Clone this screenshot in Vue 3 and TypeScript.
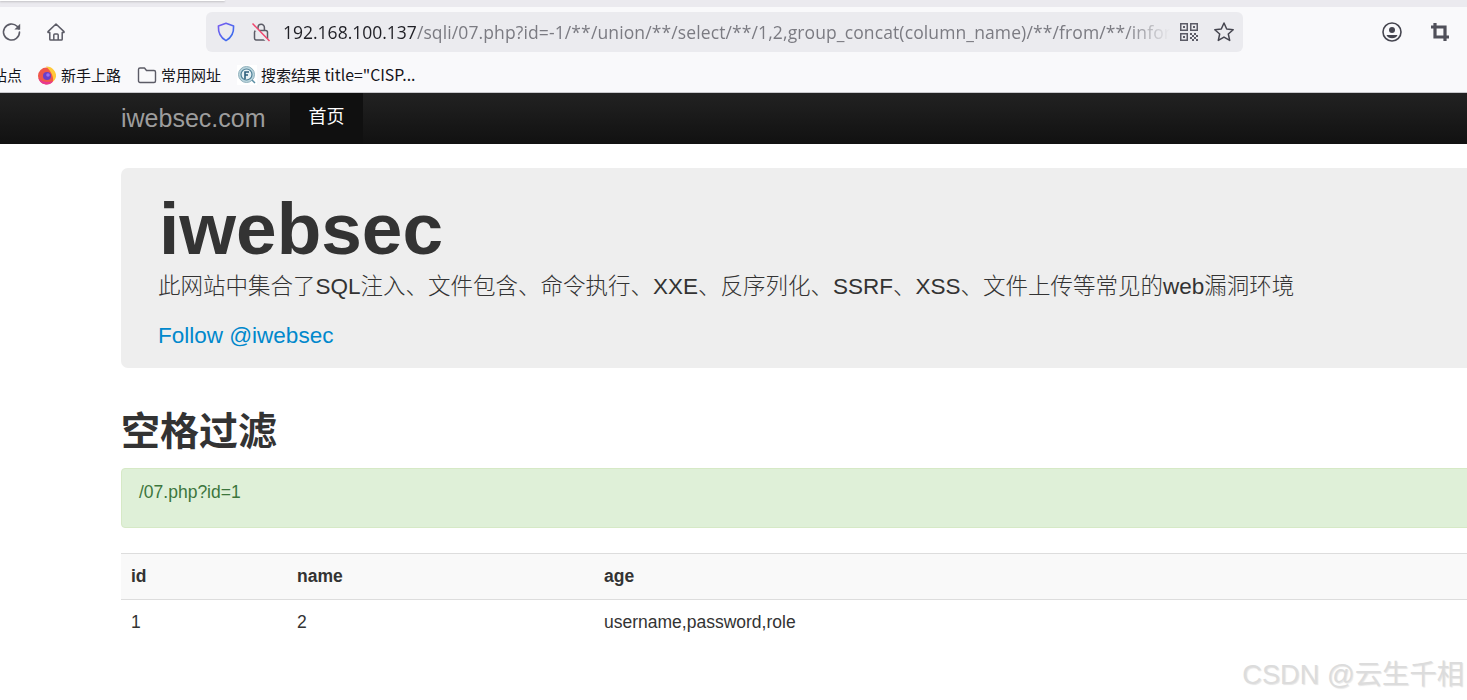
<script setup lang="ts">
const url = {
  host: '192.168.100.137',
  path: '/sqli/07.php?id=-1/**/union/**/select/**/1,2,group_concat(column_name)/**/from/**/information_schema.columns',
}
const columns = ['id', 'name', 'age']
const rows = [['1', '2', 'username,password,role']]
</script>

<template>
  <div class="page">
    <div class="tabstrip"><div class="tab"></div></div>
    <div class="toolbar">
      <div class="reload-cell">
        <svg width="22" height="22" viewBox="0 0 22 22" fill="none" stroke="#5b5b66" stroke-width="1.6">
          <path d="M18.500 11a8 8 0 1 1-2.400-5.700L18 8" stroke-linecap="round" />
          <path d="M19.200 2.800v5.800h-5.800z" fill="#5b5b66" stroke="none" />
        </svg>
      </div>
      <div class="home-cell">
        <svg width="20" height="20" viewBox="0 0 20 20" fill="none" stroke="#5b5b66" stroke-width="1.5" stroke-linejoin="round">
          <path d="M2 9.600 10 2l8 7.600v.8h-1.800v6.800a.8.8 0 0 1-.8.8H4.600a.8.8 0 0 1-.8-.8v-6.800H2z" />
          <path d="M7.800 18v-5a1 1 0 0 1 1-1h2.400a1 1 0 0 1 1 1v5" />
        </svg>
      </div>
      <div class="urlbar">
        <svg class="shield" width="20" height="22" viewBox="0 0 20 22" fill="none" stroke-width="1.6">
          <defs>
            <linearGradient id="shield-grad" x1="0" y1="0" x2="1" y2="1">
              <stop offset="0" stop-color="#7b5cf0" />
              <stop offset="1" stop-color="#2f6fed" />
            </linearGradient>
          </defs>
          <path d="M10 2.200 17.600 5c.3 6.600-1.900 11.600-7.600 14.600C4.300 16.600 2.100 11.600 2.400 5z" stroke="url(#shield-grad)" stroke-linejoin="round" />
        </svg>
        <svg class="lock" width="20" height="22" viewBox="0 0 20 22" fill="none">
          <path d="M7 9.500V6.500a3.200 3.200 0 0 1 6.400 0v3" stroke="#5b5b66" stroke-width="1.500" />
          <rect x="3.500" y="9.500" width="13" height="9.500" rx="1.800" stroke="#5b5b66" stroke-width="1.500" />
          <path d="M0.500 3.500 17 20.500" stroke="#ebebef" stroke-width="3" />
          <path d="M1.500 2.500 18.500 20" stroke="#f0476e" stroke-width="1.500" />
        </svg>
        <div class="url-wrap">
          <span class="host">{{ url.host }}</span><span class="path">{{ url.path }}</span>
        </div>
        <svg class="qr" width="18" height="18" viewBox="0 0 18 18" fill="#5b5b66">
          <path fill-rule="evenodd" d="M0 0h8v8H0zm1.500 1.500v5h5v-5zM10 0h8v8h-8zm1.500 1.500v5h5v-5zM0 10h8v8H0zm1.500 1.500v5h5v-5z" />
          <path d="M3 3h2v2H3zM13 3h2v2h-2zM3 13h2v2H3zM10 10h2v2h-2zM14 10h2v2h-2zM12 12h2v2h-2zM16 12h2v2h-2zM10 14h2v2h-2zM14 14h2v2h-2zM12 16h2v2h-2zM16 16h2v2h-2z" />
        </svg>
        <svg class="star" width="22" height="22" viewBox="0 0 22 22" fill="none" stroke="#45454f" stroke-width="1.500" stroke-linejoin="round">
          <path d="m11 2 2.700 6 6.500.7-4.900 4.300 1.400 6.400L11 16.100l-5.700 3.300 1.400-6.400-4.900-4.300 6.500-.7z" />
        </svg>
      </div>
      <svg class="account" width="20" height="20" viewBox="0 0 20 20" fill="none">
        <circle cx="10" cy="10" r="9" stroke="#45454f" stroke-width="1.600" />
        <circle cx="10" cy="8" r="3" fill="#45454f" />
        <path d="M4.500 13h11c-.8 2.200-3 3.200-5.500 3.200S5.300 15.200 4.500 13z" fill="#45454f" />
      </svg>
      <svg class="crop" width="20" height="20" viewBox="0 0 20 20" fill="none" stroke="#50505a" stroke-width="3.200">
        <path d="M5 1v14h14" />
        <path d="M1 5h14v14" />
      </svg>
    </div>
    <div class="bookmarks">
      <span class="bm bm-cut">站点</span>
      <span class="bm bm-fox">
        <svg width="20" height="20" viewBox="0 0 20 20">
          <circle cx="9.500" cy="11" r="8.500" fill="#f0574a" />
          <path d="M9 1.500c4.500-.5 9 3 10 8 .5 3-1 5.500-3 7C17 12 14 6 9 1.500z" fill="#ffc93a" />
          <path d="M1.500 13c1 4.500 4.500 6.500 8.500 6.500 3 0 5-1.500 6-3.500-3 1.500-10 2-14.500-3z" fill="#e8388f" />
          <circle cx="10" cy="11" r="4" fill="#6a3fc9" />
          <circle cx="11" cy="10" r="1.800" fill="#9a6ff0" />
        </svg>
        新手上路
      </span>
      <span class="bm bm-folder">
        <svg width="20" height="18" viewBox="0 0 20 18" fill="none" stroke="#5b5b66" stroke-width="1.400" stroke-linejoin="round">
          <path d="M1.500 3.500a1.500 1.500 0 0 1 1.500-1.500h4.500l2 2.500h7.500a1.500 1.500 0 0 1 1.500 1.500v9a1.500 1.500 0 0 1-1.500 1.500H3a1.500 1.500 0 0 1-1.500-1.500z" />
        </svg>
        常用网址
      </span>
      <span class="bm bm-fofa">
        <svg width="20" height="20" viewBox="0 0 20 20">
          <rect width="20" height="20" fill="#fff" />
          <circle cx="9.500" cy="9.500" r="8" fill="#bcd6de" stroke="#8fb0bc" />
          <circle cx="9.500" cy="9.500" r="5.500" fill="#e9f2f5" stroke="#4d7f96" stroke-width="1.200" />
          <path d="M8 14V7h4M8 10h3" stroke="#2f5f7c" stroke-width="1.600" fill="none" />
          <path d="m15 15 3 3" stroke="#5a8ea4" stroke-width="1.500" />
        </svg>
        <span>搜索结果 <span class="bm-latin">title="CISP...</span></span>
      </span>
    </div>
    <nav class="navbar">
      <div class="nav-inner">
        <a class="brand">iwebsec.com</a>
        <a class="nav-link">首页</a>
      </div>
    </nav>
    <main class="container">
      <section class="jumbotron">
        <h1>iwebsec</h1>
        <p class="lead">此网站中集合了SQL注入、文件包含、命令执行、XXE、反序列化、SSRF、XSS、文件上传等常见的web漏洞环境</p>
        <p class="follow"><a>Follow @iwebsec</a></p>
      </section>
      <h2>空格过滤</h2>
      <div class="alert">/07.php?id=1</div>
      <table>
        <thead>
          <tr><th v-for="c in columns" :key="c">{{ c }}</th></tr>
        </thead>
        <tbody>
          <tr v-for="(r, i) in rows" :key="i">
            <td v-for="(v, j) in r" :key="j">{{ v }}</td>
          </tr>
        </tbody>
      </table>
    </main>
    <div class="watermark">CSDN @云生千相</div>
  </div>
</template>

<style>
html,
body {
  margin: 0;
  overflow: hidden;
  background: #fff;
}
</style>

<style scoped>
.page {
  position: relative;
  width: 1467px;
  height: 700px;
  overflow: hidden;
  font-family: 'Liberation Sans', 'Noto Sans CJK SC', sans-serif;
  color: #333;
}

.tabstrip {
  height: 7px;
  background: #ebeaef;
}

.tab {
  width: 225px;
  height: 1px;
  background: #fff;
  border-radius: 0 0 4px 0;
  box-shadow: 0 1px 2px rgba(0, 0, 0, 0.25);
}

.toolbar {
  display: flex;
  align-items: center;
  height: 50px;
  background: #f9f9fb;
}

.reload-cell {
  display: flex;
  margin-left: 1px;
  width: 45px;
}

.home-cell {
  display: flex;
  width: 160px;
}

.urlbar {
  display: flex;
  align-items: center;
  width: 1037px;
  height: 40px;
  background: #ebebef;
  border-radius: 6px;
  box-sizing: border-box;
  padding-left: 10px;
}

.lock {
  margin-left: 15px;
}

.url-wrap {
  width: 887px;
  margin-left: 12px;
  overflow: hidden;
  white-space: nowrap;
  font-family: 'Open Sans', 'Noto Sans', sans-serif;
  font-size: 17.5px;
  -webkit-mask-image: linear-gradient(to right, #000 95%, transparent);
  mask-image: linear-gradient(to right, #000 95%, transparent);
}

.host {
  color: #1f1f25;
}

.path {
  color: #7b7b82;
  letter-spacing: 0.12px;
}

.qr {
  margin-left: 10px;
}

.star {
  margin-left: 15px;
}

.account {
  margin-left: 139px;
}

.crop {
  margin-left: 28px;
}

.bookmarks {
  display: flex;
  align-items: center;
  height: 36px;
  background: #f9f9fb;
  border-bottom: 1px solid #c8c8cc;
  box-sizing: border-box;
  font-size: 15px;
  font-family: 'Noto Sans CJK SC', 'Noto Sans', sans-serif;
  color: #15141a;
}

.bm {
  display: inline-flex;
  align-items: center;
  gap: 4px;
  white-space: nowrap;
}

.bm-cut {
  margin-left: -8px;
  width: 45px;
}

.bm-folder {
  margin-left: 16px;
}

.bm-fofa {
  margin-left: 16px;
}

.bm-latin {
  font-size: 15.800px;
}

.navbar {
  height: 51px;
  background: linear-gradient(to bottom, #222, #111);
}

.nav-inner {
  display: flex;
  height: 100%;
  padding-left: 121px;
}

.brand {
  width: 169px;
  line-height: 51px;
  font-size: 25px;
  color: #9d9d9d;
}

.nav-link {
  width: 73px;
  text-align: center;
  line-height: 49px;
  font-size: 18px;
  color: #fff;
  background: #101010;
}

.container {
  width: 1500px;
  margin-left: 121px;
  padding-top: 24px;
}

.jumbotron {
  box-sizing: border-box;
  height: 200px;
  padding: 19px 38px 0;
  background: #eee;
  border-radius: 7px;
}

h1 {
  margin: 0;
  font-size: 73px;
  line-height: 83px;
  font-weight: 700;
}

.lead {
  margin: 0 0 0 -1px;
  font-size: 22.500px;
  line-height: 33px;
  font-weight: 200;
  color: #333;
}

.follow {
  margin: 16px 0 0 -1px;
  font-size: 22.500px;
  line-height: 33px;
  color: #0088cc;
}

h2 {
  margin: 37px 0 0;
  font-size: 39px;
  line-height: 54px;
  font-weight: 700;
}

.alert {
  box-sizing: border-box;
  height: 60px;
  margin-top: 9px;
  padding: 13px 17px;
  background: #dff0d8;
  border: 1px solid #d6e9c6;
  border-radius: 4px;
  color: #3c763d;
  font-size: 17.500px;
  line-height: 20px;
}

table {
  width: 100%;
  margin-top: 25px;
  border-collapse: collapse;
  table-layout: fixed;
  font-size: 17.500px;
  line-height: 22px;
}

th {
  text-align: left;
  font-weight: 700;
  background: #f9f9f9;
  padding: 11px 10px 12px;
  border-top: 1px solid #ddd;
  border-bottom: 1px solid #ddd;
}

td {
  padding: 11px 10px;
  text-align: left;
}

th:nth-child(1),
td:nth-child(1) {
  width: 146px;
}

th:nth-child(2),
td:nth-child(2) {
  width: 287px;
}

.watermark {
  position: absolute;
  right: 3px;
  bottom: 8px;
  font-size: 27.300px;
  color: #dcdcdc;
  text-shadow: 1px 1px 1px rgba(0, 0, 0, 0.1);
  white-space: nowrap;
}
</style>
